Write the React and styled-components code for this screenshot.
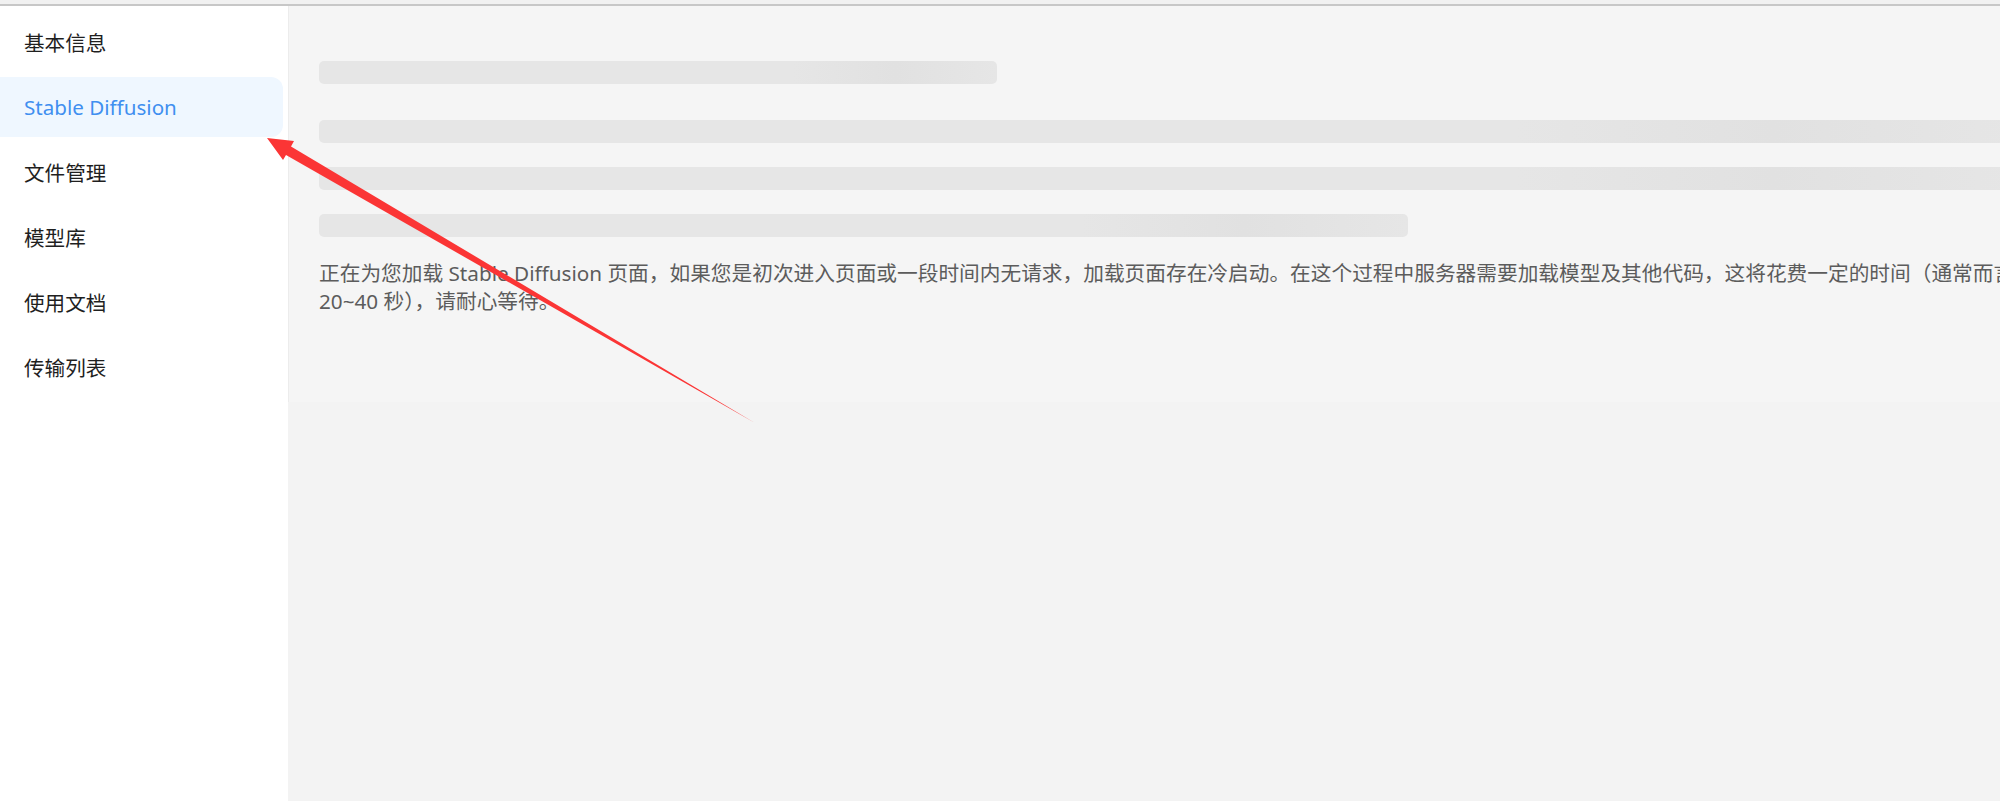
import React from "react";
import styled, { createGlobalStyle } from "styled-components";

const GlobalStyle = createGlobalStyle`
  html, body {
    margin: 0;
    padding: 0;
    overflow: hidden;
    background: #f3f3f3;
  }
  body {
    font-family: "Noto Sans", "Noto Sans CJK SC", sans-serif;
  }
`;

const Page = styled.div`
  position: relative;
  width: 2060px;
  height: 801px;
  display: flex;
  flex-direction: column;
`;

const TopStrip = styled.div`
  height: 4px;
  background: #f1f1f1;
  border-bottom: 2px solid #c7c7c7;
  flex-shrink: 0;
`;

const Layout = styled.div`
  flex: 1;
  display: flex;
`;

const Sidebar = styled.nav`
  width: 288px;
  flex-shrink: 0;
  background: #fff;
  padding: 6px 5px 0 0;
  box-sizing: border-box;
  display: flex;
  flex-direction: column;
  gap: 5px;
`;

const MenuItem = styled.div`
  height: 60px;
  display: flex;
  align-items: center;
  padding-left: 24px;
  border-radius: 0 12px 12px 0;
  font-size: 20.6px;
  color: ${p => (p.active ? "#3f8ff0" : "#1f1f1f")};
  background: ${p => (p.active ? "#eff7ff" : "transparent")};
  cursor: pointer;
`;

const Main = styled.main`
  flex: 1;
  background: #f3f3f3;
`;

const Panel = styled.section`
  height: 396px;
  box-sizing: border-box;
  background: #f5f5f5;
  border-left: 1px solid #ececec;
  padding: 55px 30px 0 30px;
`;

const Bar = styled.div`
  height: 23px;
  border-radius: 5px;
  width: ${p => p.width || "100%"};
  margin-top: ${p => p.gap ?? 24}px;
  background: linear-gradient(90deg, #e6e6e6 0%, #e6e6e6 70%, #e1e1e1 85%, #e6e6e6 100%);
`;

const Notice = styled.p`
  margin: 22px 0 0;
  font-size: 20.7px;
  line-height: 28px;
  color: #5c5c5c;
`;

const NoBreak = styled.span`
  white-space: nowrap;
`;

const Arrow = styled.svg`
  position: absolute;
  left: 0;
  top: 0;
  pointer-events: none;
`;

const menu = ["基本信息", "Stable Diffusion", "文件管理", "模型库", "使用文档", "传输列表"];

const App = () => {
  return (
    <>
      <GlobalStyle />
      <Page>
        <TopStrip />
        <Layout>
          <Sidebar>
            {menu.map(m => (
              <MenuItem key={m} active={m === "Stable Diffusion"}>
                {m}
              </MenuItem>
            ))}
          </Sidebar>
          <Main>
            <Panel>
              <Bar width="678px" gap={0} />
              <Bar gap={36} />
              <Bar />
              <Bar width="1089px" />
              <Notice>
                正在为您加载 Stable Diffusion
                页面，如果您是初次进入页面或一段时间内无请求，加载页面存在冷启动。在这个过程中服务器需要加载模型及其他代码，这将花费一定的时间（通常而言{" "}
                <NoBreak>20~40 秒）</NoBreak>，请耐心等待。
              </Notice>
            </Panel>
          </Main>
        </Layout>
        <Arrow width="2000" height="801" viewBox="0 0 2000 801">
          <polygon
            points="267,138 294,141 291,146.5 755,423 286,155 283,160"
            fill="#fb3535"
          />
        </Arrow>
      </Page>
    </>
  );
};

export default App;
